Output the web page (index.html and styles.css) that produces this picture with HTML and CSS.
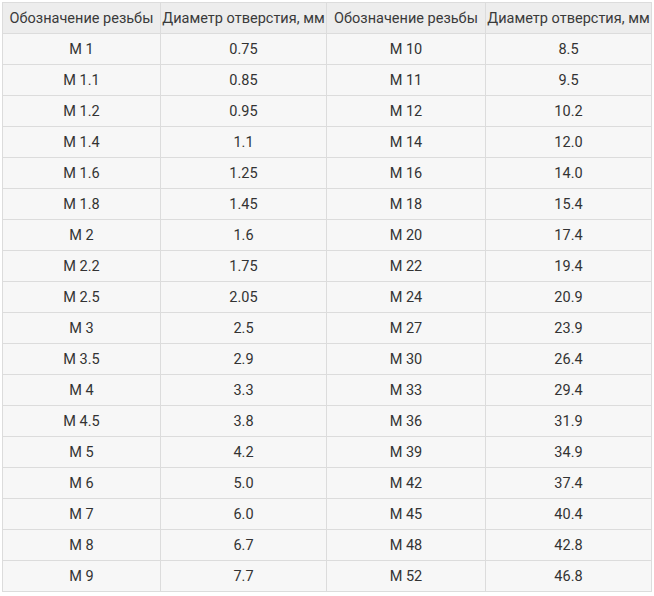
FILE: index.html
```html
<!DOCTYPE html>
<html lang="ru">
<head>
<meta charset="utf-8">
<link rel="stylesheet" href="styles.css">
</head>
<body>
<table class="thread-table">
<colgroup>
<col class="c1"><col class="c2"><col class="c3"><col class="c4">
</colgroup>
<thead>
<tr><th>Обозначение резьбы</th><th>Диаметр отверстия, мм</th><th>Обозначение резьбы</th><th>Диаметр отверстия, мм</th></tr>
</thead>
<tbody>
<tr><td>М 1</td><td>0.75</td><td>М 10</td><td>8.5</td></tr>
<tr><td>М 1.1</td><td>0.85</td><td>М 11</td><td>9.5</td></tr>
<tr><td>М 1.2</td><td>0.95</td><td>М 12</td><td>10.2</td></tr>
<tr><td>М 1.4</td><td>1.1</td><td>М 14</td><td>12.0</td></tr>
<tr><td>М 1.6</td><td>1.25</td><td>М 16</td><td>14.0</td></tr>
<tr><td>М 1.8</td><td>1.45</td><td>М 18</td><td>15.4</td></tr>
<tr><td>М 2</td><td>1.6</td><td>М 20</td><td>17.4</td></tr>
<tr><td>М 2.2</td><td>1.75</td><td>М 22</td><td>19.4</td></tr>
<tr><td>М 2.5</td><td>2.05</td><td>М 24</td><td>20.9</td></tr>
<tr><td>М 3</td><td>2.5</td><td>М 27</td><td>23.9</td></tr>
<tr><td>М 3.5</td><td>2.9</td><td>М 30</td><td>26.4</td></tr>
<tr><td>М 4</td><td>3.3</td><td>М 33</td><td>29.4</td></tr>
<tr><td>М 4.5</td><td>3.8</td><td>М 36</td><td>31.9</td></tr>
<tr><td>М 5</td><td>4.2</td><td>М 39</td><td>34.9</td></tr>
<tr><td>М 6</td><td>5.0</td><td>М 42</td><td>37.4</td></tr>
<tr><td>М 7</td><td>6.0</td><td>М 45</td><td>40.4</td></tr>
<tr><td>М 8</td><td>6.7</td><td>М 48</td><td>42.8</td></tr>
<tr><td>М 9</td><td>7.7</td><td>М 52</td><td>46.8</td></tr>
</tbody>
</table>
</body>
</html>
```
FILE: styles.css
```css
html, body {
  margin: 0;
  background: #ffffff;
}
body {
  padding: 2px;
  font-family: Roboto, "Open Sans", Arial, sans-serif;
  color: #333333;
}
.thread-table {
  border-collapse: collapse;
  table-layout: fixed;
  width: 649px;
  background: #f7f7f7;
  font-size: 14.5px;
}
.c1 { width: 158px; }
.c2 { width: 166px; }
.c3 { width: 159px; }
.c4 { width: 166px; }
.thread-table th,
.thread-table td {
  border: 1px solid #dcdcdc;
  height: 30px;
  padding: 0;
  text-align: center;
  white-space: nowrap;
  overflow: hidden;
}
.thread-table th {
  background: #ededed;
  font-weight: normal;
  color: #3a3a3a;
}
```
